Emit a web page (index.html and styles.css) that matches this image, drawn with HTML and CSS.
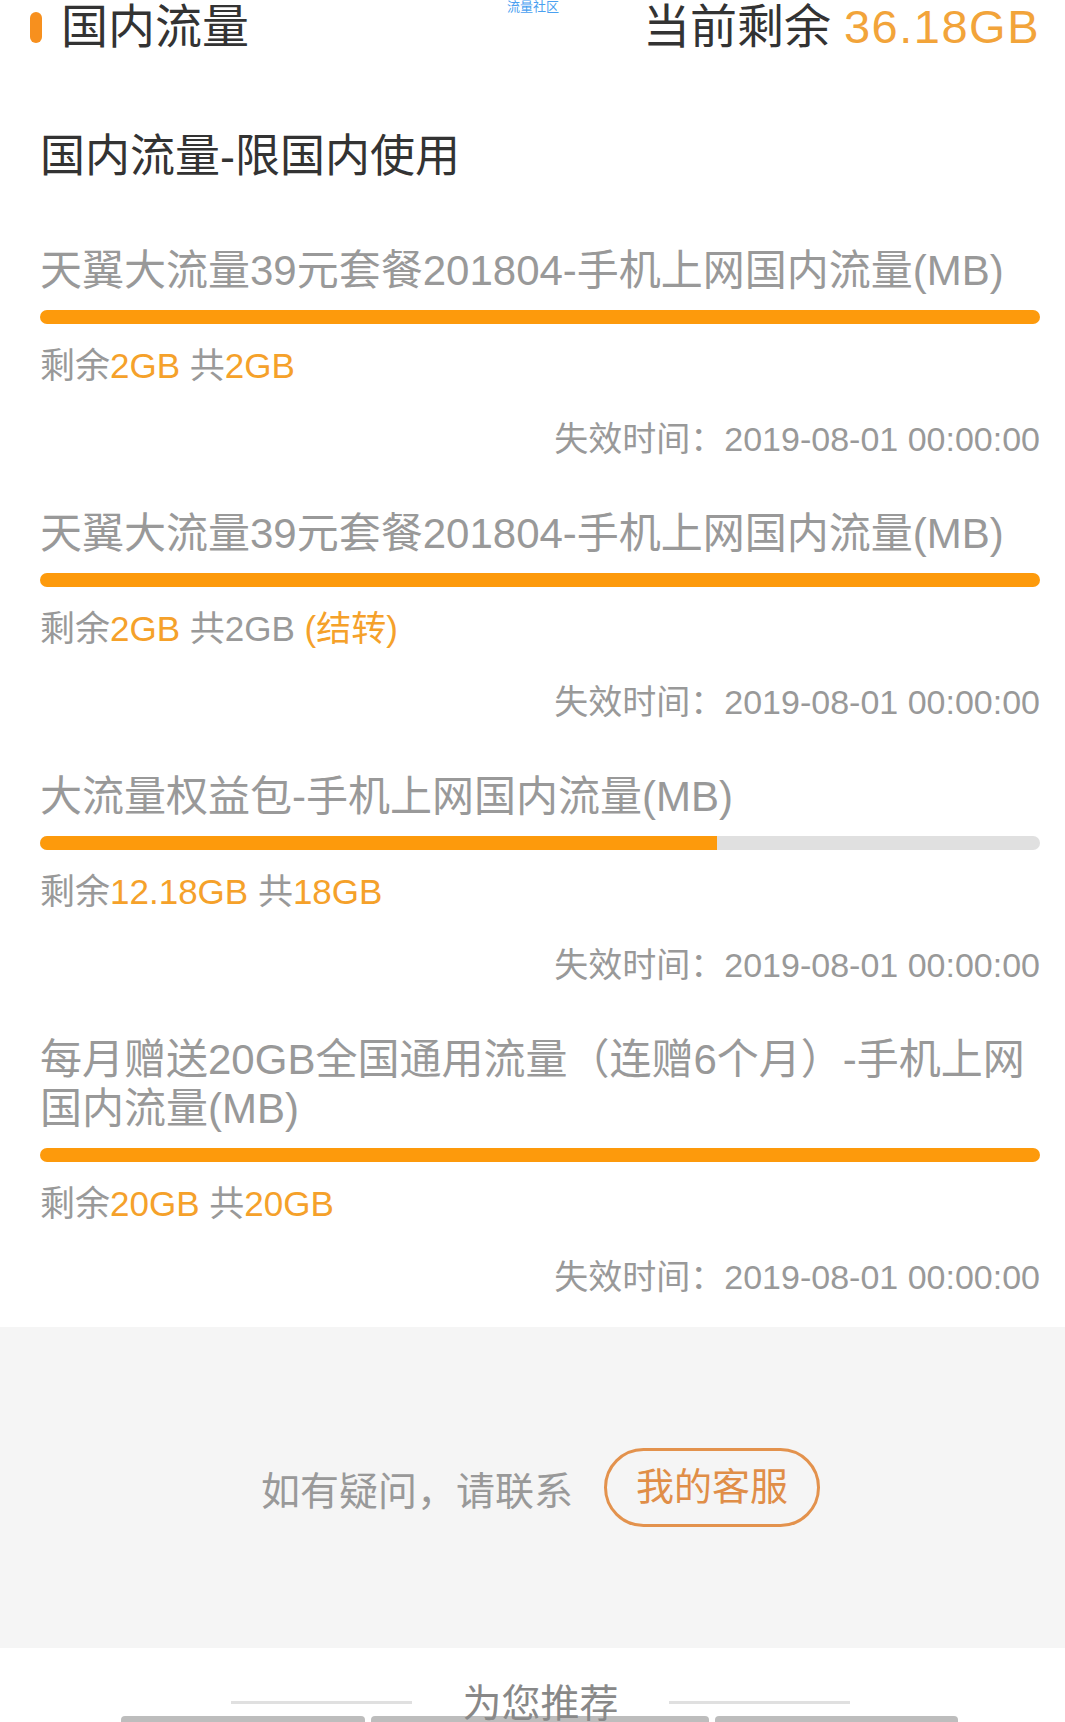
FILE: index.html
```html
<!DOCTYPE html>
<html lang="zh-CN">
<head>
  <meta charset="UTF-8" />
  <meta name="viewport" content="width=device-width, initial-scale=1.0"/>
  <title>国内流量</title>
  <link rel="stylesheet" href="styles.css">
</head>
<body>
  <div class="header">
    <div class="header-left">
      <span class="mark"></span>
      <span class="header-title">国内流量</span>
    </div>
    <div class="header-right">当前剩余 <span class="hl">36.18GB</span></div>
    <span class="watermark">流量社区</span>
  </div>

  <div class="section-title">国内流量-限国内使用</div>

  <div class="plan-list">
    <div class="plan">
      <div class="plan-name">天翼大流量39元套餐201804-手机上网国内流量(MB)</div>
      <div class="bar"><div class="bar-fill" style="width: 100%;"></div></div>
      <div class="plan-left">剩余<span class="hl">2GB</span> 共<span class="hl">2GB</span></div>
      <div class="plan-expire">失效时间：2019-08-01 00:00:00</div>
    </div>

    <div class="plan">
      <div class="plan-name">天翼大流量39元套餐201804-手机上网国内流量(MB)</div>
      <div class="bar"><div class="bar-fill" style="width: 100%;"></div></div>
      <div class="plan-left">剩余<span class="hl">2GB</span> 共2GB <span class="hl">(结转)</span></div>
      <div class="plan-expire">失效时间：2019-08-01 00:00:00</div>
    </div>

    <div class="plan">
      <div class="plan-name">大流量权益包-手机上网国内流量(MB)</div>
      <div class="bar"><div class="bar-fill" style="width: 67.7%;"></div></div>
      <div class="plan-left">剩余<span class="hl">12.18GB</span> 共<span class="hl">18GB</span></div>
      <div class="plan-expire">失效时间：2019-08-01 00:00:00</div>
    </div>

    <div class="plan">
      <div class="plan-name">每月赠送20GB全国通用流量（连赠6个月）-手机上网国内流量(MB)</div>
      <div class="bar"><div class="bar-fill" style="width: 100%;"></div></div>
      <div class="plan-left">剩余<span class="hl">20GB</span> 共<span class="hl">20GB</span></div>
      <div class="plan-expire">失效时间：2019-08-01 00:00:00</div>
    </div>
  </div>

  <div class="contact">
    <span class="contact-text">如有疑问，请联系</span>
    <button class="contact-btn">我的客服</button>
  </div>

  <div class="recommend">
    <div class="recommend-head">
      <span class="line"></span>
      <span class="recommend-title">为您推荐</span>
      <span class="line"></span>
    </div>
    <div class="cards">
      <div class="card card-a"></div>
      <div class="card card-b"></div>
      <div class="card card-c"></div>
    </div>
  </div>
</body>
</html>
```

FILE: styles.css
```css
body {
  margin: 0;
  font-family: "Liberation Sans", "Noto Sans CJK SC", sans-serif;
  background: #fff;
  color: #999;
  height: 1722px;
  overflow: hidden;
}

.hl {
  color: #f5a12a;
}

/* top bar */
.header {
  position: relative;
  height: 54px;
  display: flex;
  justify-content: space-between;
  align-items: center;
  padding: 0 25px 0 30px;
}

.header-left {
  display: flex;
  align-items: center;
  gap: 19px;
}

.mark {
  width: 12px;
  height: 31px;
  border-radius: 6px;
  background: #f7901e;
}

.header-title,
.header-right {
  font-size: 47px;
  line-height: 54px;
  color: #333;
}

.header-right .hl {
  color: #f2a43a;
  letter-spacing: 1.5px;
}

.watermark {
  position: absolute;
  left: 507px;
  top: 0;
  font-size: 13px;
  line-height: 14px;
  color: #4aa0f0;
}

.section-title {
  margin: 73px 0 0;
  padding: 0 40px;
  font-size: 45px;
  line-height: 60px;
  color: #333;
}

/* plans */
.plan-list {
  padding: 13px 25px 26px 40px;
}

.plan {
  padding-top: 46px;
}

.plan-name {
  font-size: 42px;
  line-height: 49px;
  color: #999;
}

.bar {
  margin-top: 15px;
  height: 14px;
  border-radius: 7px;
  background: #e0e0e0;
  overflow: hidden;
}

.bar-fill {
  height: 100%;
  background: #fd9a0c;
}

.plan-left {
  margin-top: 18px;
  font-size: 35px;
  line-height: 48px;
}

.plan-expire {
  margin-top: 25px;
  font-size: 34px;
  line-height: 48px;
  text-align: right;
}

/* contact */
.contact {
  height: 321px;
  padding-left: 16px;
  background: #f5f5f5;
  display: flex;
  justify-content: center;
  align-items: center;
  gap: 31px;
}

.contact-text {
  font-size: 39px;
  color: #999;
}

.contact-btn {
  font-family: inherit;
  font-size: 38px;
  line-height: 73px;
  padding: 0 29px;
  color: #e08e48;
  background: transparent;
  border: 3px solid #e3924d;
  border-radius: 40px;
}

/* recommend */
.recommend-head {
  position: relative;
  z-index: 1;
  height: 34px;
  padding: 34px 0 0 16px;
  display: flex;
  justify-content: center;
  align-items: flex-start;
}

.recommend-title {
  font-size: 39px;
  line-height: 44px;
  color: #888;
  margin: 0 50px;
}

.line {
  width: 181px;
  height: 3px;
  margin-top: 19px;
  background: #e0e0e0;
}

.cards {
  display: flex;
  gap: 6px;
  padding-left: 121px;
}

.card {
  height: 20px;
  background: #bdbdbd;
  border-radius: 4px 4px 0 0;
}

.card-a { width: 244px; }
.card-b { width: 338px; }
.card-c { width: 243px; }
```
